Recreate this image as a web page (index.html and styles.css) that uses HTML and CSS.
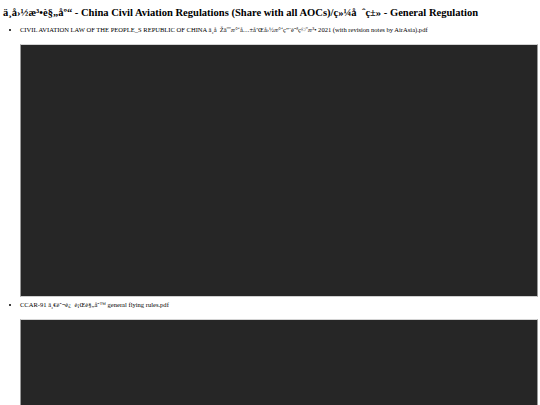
FILE: index.html
```html
<!DOCTYPE html>
<html>
<head>
<meta charset="utf-8">
<link rel="stylesheet" href="styles.css">
</head>
<body>
<h1 class="title">ä¸­å›½æ³•è§„åº“ - China Civil Aviation Regulations (Share with all AOCs)/ç»¼å&nbsp; ˆç±» - General Regulation</h1>
<ul class="files">
<li class="file">
<span class="name">CIVIL AVIATION LAW OF THE PEOPLE_S REPUBLIC OF CHINA ä¸­å&nbsp; Žäººæ°‘å…±å’Œå›½æ°‘ç”¨èˆªç©ºæ³• 2021 (with revision notes by AirAsia).pdf</span>
<div class="viewer"></div>
</li>
<li class="file">
<span class="name">CCAR-91 ä¸€èˆ¬è¿&nbsp; è¡Œè§„åˆ™ general flying rules.pdf</span>
<div class="viewer"></div>
</li>
</ul>
</body>
</html>
```
FILE: styles.css
```css
html, body {
  margin: 0;
  padding: 0;
  background: #ffffff;
}
body {
  padding: 0 3px;
  font-family: "Liberation Serif", "Times New Roman", serif;
  color: #000000;
}
.title {
  font-size: 10.55px;
  line-height: 13px;
  font-weight: bold;
  margin: 6px 0 7px 0;
  white-space: nowrap;
}
.files {
  margin: 0;
  padding-left: 17px;
  list-style: disc;
}
.file {
  font-size: 6.55px;
  line-height: 8px;
  margin-top: 0;
}
.file + .file {
  margin-top: 4px;
}
.name {
  display: block;
  white-space: nowrap;
}
.viewer {
  margin-top: 10px;
  height: 251px;
  width: 516px;
  background: #262626;
  border: 1px solid #9a9a9a;
  border-top-color: #d4d4d4;
  border-bottom-color: #cfcfcf;
}
```
